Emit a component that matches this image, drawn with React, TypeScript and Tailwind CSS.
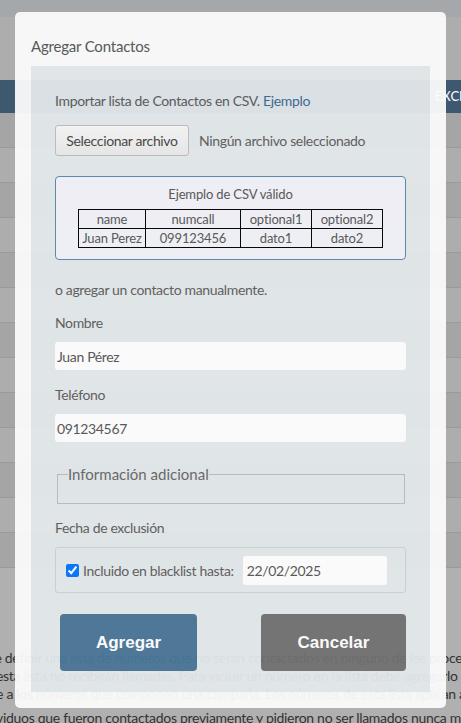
import React from "react"

const rows = Array.from({ length: 13 })

export default function App() {
  return (
    <div className="relative w-[461px] h-[723px] overflow-hidden bg-[#b0b0b0] font-['Lato','Liberation_Sans',sans-serif]">
      {/* page behind the overlay */}
      <div className="h-[17px] bg-[#a4a8ab]" />
      <div className="h-[63px] bg-[#adadad]" />
      <div className="h-[33px] bg-[#3e5870] flex items-center justify-end text-white text-[13px] overflow-hidden whitespace-nowrap">
        <span className="-mr-[45px]">EXCLUSIÓN</span>
      </div>
      {rows.map((_, i) => (
        <div
          key={i}
          className={`h-[35px] border-b border-[#9a9a9a] ${i % 2 === 0 ? "bg-[#a5a5a5]" : "bg-[#adadad]"}`}
        />
      ))}
      <div className="pt-[81px] text-[14px] leading-[18px] text-[#333] whitespace-nowrap overflow-hidden tracking-[-0.3px]">
        <p className="-ml-[44px]">permite definir una lista de números que no serán contactados en ninguno de los procesos de</p>
        <p className="-ml-[4px]">esta lista no recibirán llamadas. Para incluir un número en la lista debe agregarlo</p>
        <p className="-ml-[4px]">e a los números que componen una campaña. Los números de esta lista aplican a todas las</p>
        <p className="mt-[6px] -ml-[4px]">viduos que fueron contactados previamente y pidieron no ser llamados nunca más. También</p>
      </div>

      {/* modal */}
      <div className="absolute left-[15px] top-[12px] w-[431px] h-[696px] rounded-[5px] bg-[#fbfbfb] opacity-[0.95] px-[16px]">
        <h2 className="h-[54px] pt-[24px] text-[15px] leading-[20px] text-[#555] tracking-[-0.2px]">Agregar Contactos</h2>
        <div className="bg-[#e3e8eb] px-[24px] pt-[25px] pb-[21px] text-[14px] tracking-[-0.35px] text-[#5c5c5c]">
          <p className="leading-[20px]">
            Importar lista de Contactos en CSV. <span className="text-[#3f6c92]">Ejemplo</span>
          </p>
          <div className="mt-[14px] flex items-center gap-[10px]">
            <button className="h-[31px] w-[134px] rounded-[3px] border border-[#bdbdbd] bg-gradient-to-b from-[#f7f7f7] to-[#e9e9e9] text-[#444] text-[14px] tracking-[-0.35px]">
              Seleccionar archivo
            </button>
            <span>Ningún archivo seleccionado</span>
          </div>
          <div className="mt-[20px] h-[84px] rounded-[4px] border border-[#5a88aa] bg-[#f2f2f9] pt-[8px]">
            <p className="text-center text-[13px] leading-[18px] text-[#555] tracking-[-0.15px]">Ejemplo de CSV válido</p>
            <table className="mx-auto mt-[6px] w-[305px] border-collapse text-[13px] leading-[18px] text-[#555] text-center tracking-[-0.15px]">
              <tbody>
                <tr>
                  <td className="border border-black w-[67px]">name</td>
                  <td className="border border-black w-[95px]">numcall</td>
                  <td className="border border-black w-[71px]">optional1</td>
                  <td className="border border-black">optional2</td>
                </tr>
                <tr>
                  <td className="border border-black">Juan Perez</td>
                  <td className="border border-black">099123456</td>
                  <td className="border border-black">dato1</td>
                  <td className="border border-black">dato2</td>
                </tr>
              </tbody>
            </table>
          </div>
          <p className="mt-[20px] leading-[20px]">o agregar un contacto manualmente.</p>
          <p className="mt-[13px] leading-[20px]">Nombre</p>
          <input
            className="mt-[9px] block w-[351px] h-[28px] rounded-[3px] bg-white px-[2px] text-[14px] tracking-[-0.35px] text-[#555] outline-none"
            defaultValue="Juan Pérez"
          />
          <p className="mt-[15px] leading-[20px]">Teléfono</p>
          <input
            className="mt-[9px] block w-[351px] h-[28px] rounded-[3px] bg-white px-[2px] text-[14px] tracking-[-0.35px] text-[#555] outline-none"
            defaultValue="091234567"
          />
          <fieldset className="mt-[22px] ml-[2px] w-[348px] h-[40px] border border-[#bcbcbc] px-[10px]">
            <legend className="text-[15px] leading-[20px] text-[#666] tracking-normal">Información adicional</legend>
          </fieldset>
          <p className="mt-[14px] leading-[20px]">Fecha de exclusión</p>
          <div className="mt-[9px] h-[46px] w-[351px] rounded-[3px] border border-[#cdd1d4] flex items-center pl-[10px]">
            <input type="checkbox" defaultChecked className="w-[13px] h-[13px] accent-[#0075ff]" />
            <span className="ml-[4px] whitespace-nowrap">Incluido en blacklist hasta:</span>
            <div className="ml-[9px] h-[29px] w-[144px] rounded-[3px] bg-white flex items-center px-[4px] text-[#555]">
              22/02/2025
            </div>
          </div>
          <div className="mt-[21px] flex justify-between pl-[5px]">
            <button className="h-[57px] w-[137px] rounded-[4px] bg-[#4a7697] text-white text-[17px] font-bold font-['Liberation_Sans',sans-serif] tracking-normal">
              Agregar
            </button>
            <button className="h-[57px] w-[145px] rounded-[4px] bg-[#717171] text-white text-[17px] font-bold font-['Liberation_Sans',sans-serif] tracking-normal">
              Cancelar
            </button>
          </div>
        </div>
      </div>
    </div>
  )
}
